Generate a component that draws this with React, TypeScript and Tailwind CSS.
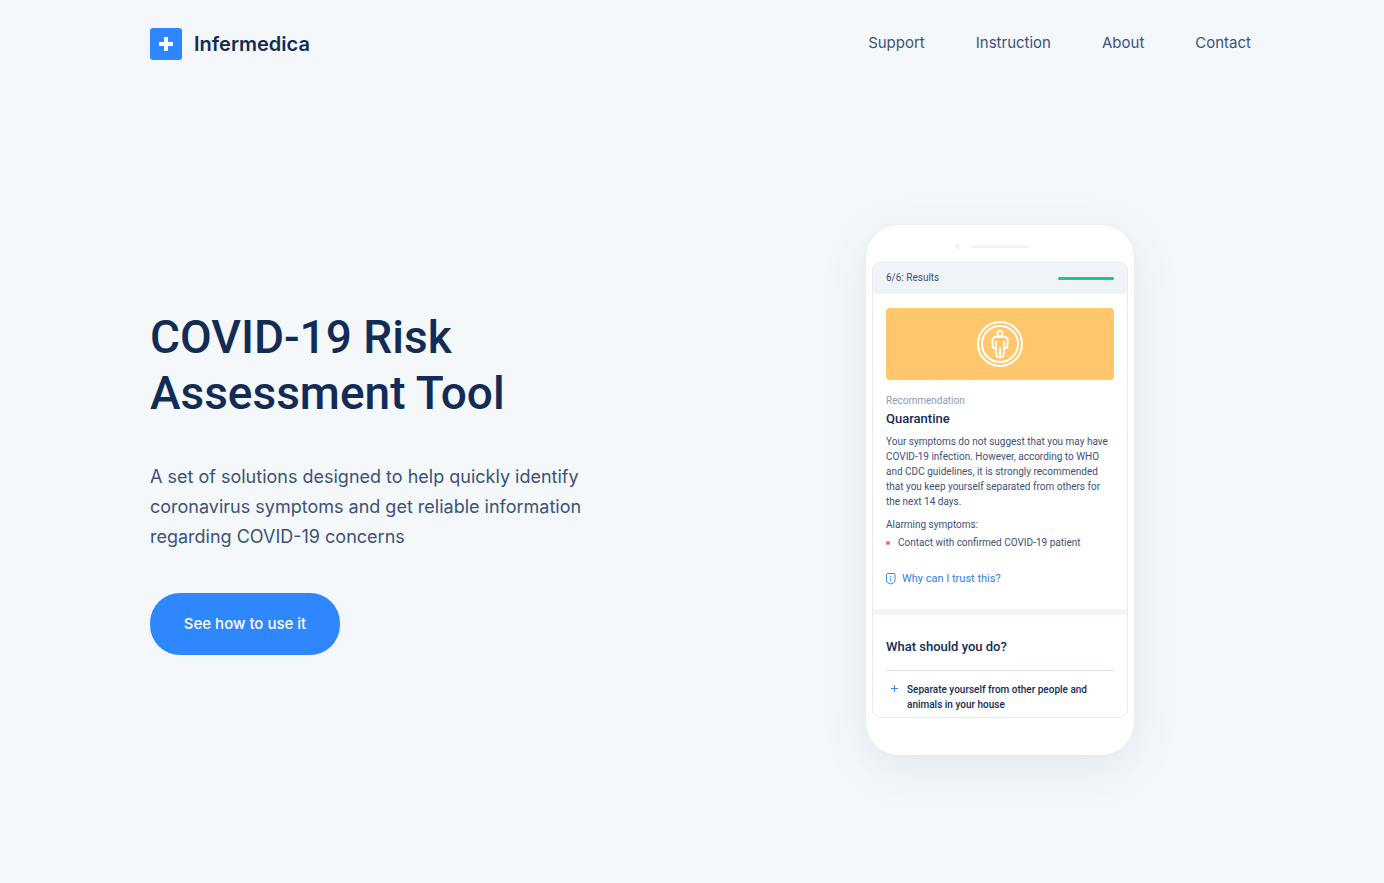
const links = ["Support", "Instruction", "About", "Contact"];

function Logo() {
  return (
    <a href="#" className="flex items-center gap-3 text-[20px] leading-8 font-semibold text-[#132c56]">
      <svg width="32" height="32" viewBox="0 0 32 32" aria-hidden="true">
        <rect width="32" height="32" rx="3" fill="#2f87ff" />
        <path d="M14 9h4v5h5v4h-5v5h-4v-5H9v-4h5z" fill="#fff" />
      </svg>
      Infermedica
    </a>
  );
}

function PersonIcon() {
  return (
    <svg width="46" height="46" viewBox="0 0 46 46" fill="none" stroke="#fff" strokeWidth="1.9" strokeLinejoin="round" strokeLinecap="round" aria-hidden="true">
      <circle cx="23" cy="23" r="22" strokeWidth="2" />
      <circle cx="23" cy="23" r="18" strokeWidth="2" />
      <rect x="20.5" y="9.8" width="5" height="5.8" rx="2.4" />
      <path d="M18.8 27.2h-1.4q-1.6 0-1.7-1.8l-.4-5.6q0-4 3.900-4h7.600q3.900 0 3.900 4l-.4 5.600q-.1 1.800-1.700 1.800h-1.400" />
      <path d="M18.800 20.800v6.400l.8 7.400q.2 1.500 1.400 1.500h4q1.200 0 1.400-1.500l.8-7.400v-6.400M23 27v8.600" />
    </svg>
  );
}

function ShieldIcon() {
  return (
    <svg width="10" height="12" viewBox="0 0 10 12" fill="none" stroke="#2f87ff" aria-hidden="true">
      <path d="M1.500.5h6.500q1 0 1 1v6q0 1.600-1.500 2.300l-2.750 1.200-2.750-1.200Q.5 9.100.5 7.500v-6q0-1 1-1z" />
      <path d="M4.750 3v1.200M4.750 5.200v3" />
    </svg>
  );
}

function Phone() {
  return (
    <section
      aria-label="Assessment results"
      className="w-[268px] shrink-0 rounded-[32px] bg-white px-1.5 pb-[37px] font-['Roboto',sans-serif] text-[10px] leading-[15px] text-[#3c5179] shadow-[0_0_1px_rgba(60,81,121,0.15),0_12px_48px_rgba(60,81,121,0.1)]"
    >
      <div className="flex h-[37px] items-center pt-1.5 pl-[83px]">
        <span className="h-[5px] w-[5px] rounded-full bg-[#f0f3f8]" />
        <span className="ml-3 h-[3px] w-14 rounded-full bg-[#f0f3f8]" />
      </div>
      <div className="overflow-hidden rounded-lg border border-[#e7ebf1]">
        <div className="flex h-[31px] items-center justify-between bg-[#f0f3f8] px-[13px]">
          <span className="pb-0.5">6/6: Results</span>
          <span className="h-[3px] w-14 rounded-full bg-[#21c38e]" />
        </div>
        <div className="px-[13px] pt-3.5 pb-[22px]">
          <div className="flex h-[72px] items-center justify-center rounded bg-[#ffc66b]">
            <PersonIcon />
          </div>
          <p className="mt-[13px] text-[#8d9bb3]">Recommendation</p>
          <h2 className="mt-px text-[13px] leading-5 font-medium text-[#132c56]">Quarantine</h2>
          <p className="mt-[5px]">
            Your symptoms do not suggest that you may have
            <br />
            COVID-19 infection. However, according to WHO
            <br />
            and CDC guidelines, it is strongly recommended
            <br />
            that you keep yourself separated from others for
            <br />
            the next 14 days.
          </p>
          <p className="mt-2">Alarming symptoms:</p>
          <ul className="mt-[3px]">
            <li className="flex items-center gap-2">
              <span className="h-1 w-1 rounded-full bg-[#ff5c60]" />
              Contact with confirmed COVID-19 patient
            </li>
          </ul>
          <a href="#trust" className="mt-[21px] flex items-center gap-1.5 text-[11px] leading-4 text-[#2f7de8]">
            <ShieldIcon />
            Why can I trust this?
          </a>
        </div>
        <div className="h-1.5 bg-[#f0f3f8]" />
        <div className="px-[13px] pt-[22px] pb-[5px] font-medium text-[#132c56]">
          <h2 className="text-[13px] leading-5">What should you do?</h2>
          <button type="button" className="mt-[13px] flex w-full items-start border-t border-[#dbe3ec] pt-[11px] pl-[5px] text-left">
            <svg width="7" height="13" viewBox="0 0 7 13" stroke="#2f87ff" fill="none" aria-hidden="true">
              <path d="M0 6.500h7M3.500 3v7" />
            </svg>
            <span className="ml-[9px]">
              Separate yourself from other people and
              <br />
              animals in your house
            </span>
          </button>
        </div>
      </div>
    </section>
  );
}

export default function App() {
  return (
    <div className="min-h-screen bg-[#f4f8fb] pr-[133px] pl-[150px] font-['Inter',sans-serif]">
      <header className="flex items-center justify-between pt-7">
        <Logo />
        <nav className="flex gap-[51px] pb-0.5 text-[15px] leading-6 text-[#3c5179]">
          {links.map((label) => (
            <a key={label} href={"#" + label.toLowerCase()}>
              {label}
            </a>
          ))}
        </nav>
      </header>
      <main className="flex items-start justify-between gap-8 pt-[165px] pr-[117px] pb-32">
        <div className="pt-[84px]">
          <h1 className="font-['Roboto',sans-serif] text-[46px] leading-[56px] font-medium text-[#132c56]">
            COVID-19 Risk
            <br />
            Assessment Tool
          </h1>
          <p className="mt-[41px] text-[18px] leading-[30px] text-[#3c5179]">
            A set of solutions designed to help quickly identify
            <br />
            coronavirus symptoms and get reliable information
            <br />
            regarding COVID-19 concerns
          </p>
          <button type="button" className="mt-[41px] h-[62px] w-[190px] rounded-[30px] bg-[#2f87ff] text-[15px] font-medium text-white">
            See how to use it
          </button>
        </div>
        <Phone />
      </main>
    </div>
  );
}
